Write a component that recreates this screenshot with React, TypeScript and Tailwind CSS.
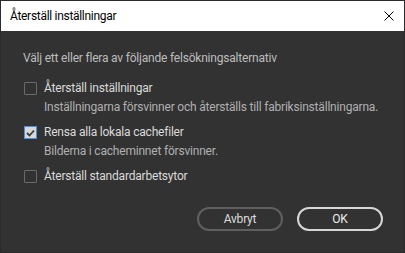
export default function App() {
  return (
    <div className="w-[405px] h-[253px] bg-[#2b2b2b] p-px flex flex-col font-['Roboto',sans-serif]">
      <div className="h-[30px] bg-white flex items-center justify-between pl-[9px] pr-[10px] shrink-0">
        <span className="text-[12px] tracking-[-0.3px] text-black">Återställ inställningar</span>
        <svg width="10" height="10" viewBox="0 0 10 10" className="text-black">
          <path d="M0.5 0.5L9.5 9.5M9.5 0.5L0.5 9.5" stroke="currentColor" strokeWidth="1" />
        </svg>
      </div>
      <div className="flex-1 bg-[#323232] flex flex-col pl-[22px] pr-[21px] pt-[19px] text-[12px] tracking-[-0.2px] whitespace-nowrap">
        <p className="text-[#bdbdbd] leading-[16px]">Välj ett eller flera av följande felsökningsalternativ</p>
        <div className="mt-[14px] flex flex-col gap-[9px]">
          <Option label="Återställ inställningar" desc="Inställningarna försvinner och återställs till fabriksinställningarna." />
          <Option checked label="Rensa alla lokala cachefiler" desc="Bilderna i cacheminnet försvinner." />
          <Option label="Återställ standardarbetsytor" />
        </div>
        <div className="mt-[23px] flex justify-end gap-[14px]">
          <button className="w-[86px] h-[24px] rounded-full border-2 border-[#5f5f5f] text-[#dcdcdc] text-[12px] leading-none">Avbryt</button>
          <button className="w-[86px] h-[24px] rounded-full border-2 border-[#d6d6d6] text-[#ececec] text-[12px] leading-none">OK</button>
        </div>
      </div>
    </div>
  );
}

function Option({ label, desc, checked }: { label: string; desc?: string; checked?: boolean }) {
  return (
    <div className="flex gap-[7px]">
      <div className="pt-[2px] shrink-0 pl-px">
        {checked ? (
          <div className="w-[13px] h-[13px] border border-[#4b8ee8] bg-[#d8d8d8] flex items-center justify-center">
            <svg width="9" height="8" viewBox="0 0 9 8">
              <path d="M1 4L3.5 6.5L8 1.5" stroke="#3a3a3a" strokeWidth="1.8" fill="none" />
            </svg>
          </div>
        ) : (
          <div className="w-[13px] h-[13px] border border-[#6a6a6a] rounded-[1px]" />
        )}
      </div>
      <div className="flex flex-col">
        <span className="text-[#dadada] leading-[16px]">{label}</span>
        {desc && <span className="text-[#b0b0b0] leading-[16px] mt-[3px]">{desc}</span>}
      </div>
    </div>
  );
}
